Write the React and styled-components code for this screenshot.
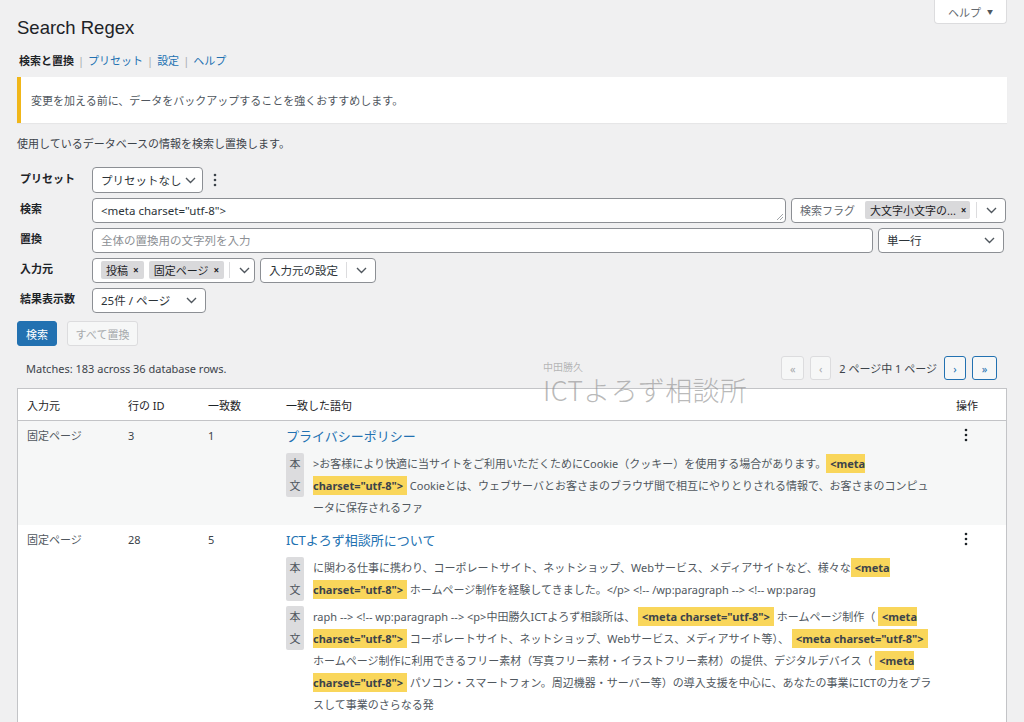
import React from 'react';
import styled, { createGlobalStyle } from 'styled-components';

const FONT = `"Noto Sans", "Noto Sans CJK JP", sans-serif`;

const Global = createGlobalStyle`
  html, body { margin: 0; padding: 0; background: #f0f0f1; }
  body { font-family: ${FONT}; color: #3c434a; font-size: 11px; }
  * { box-sizing: border-box; }
`;

const Page = styled.div`
  position: relative;
  padding: 0 17px;
  height: 722px;
  overflow: hidden;
`;

const Header = styled.div`
  display: flex;
  justify-content: space-between;
  align-items: flex-start;
`;

const Title = styled.h1`
  margin: 16px 0 0;
  font-family: "Liberation Sans", "Noto Sans CJK JP", sans-serif;
  font-size: 18.5px;
  line-height: 24px;
  font-weight: 400;
  color: #1d2327;
`;

const HelpTab = styled.div`
  width: 73px;
  height: 24px;
  background: #fff;
  border: 1px solid #dcdcde;
  border-top: none;
  border-radius: 0 0 4px 4px;
  color: #646970;
  font-size: 11px;
  display: flex;
  align-items: center;
  justify-content: center;
  gap: 6px;
`;

const Caret = styled.span`
  font-size: 6px;
  color: #50575e;
`;

const SubNav = styled.nav`
  margin: 13px 0 0 2px;
  display: flex;
  align-items: center;
  line-height: 16px;
  font-size: 11px;
`;

const NavItem = styled.span`
  color: ${p => (p.$current ? '#1d2327' : '#2271b1')};
  font-weight: ${p => (p.$current ? 700 : 400)};
`;

const NavSep = styled.span`
  color: #a7aaad;
  margin: 0 4px;
`;

const Notice = styled.div`
  margin-top: 8px;
  height: 46px;
  background: #fff;
  border-left: 4px solid #f0b619;
  box-shadow: 0 1px 1px rgba(0, 0, 0, 0.04);
  padding: 0 10px;
  display: flex;
  align-items: center;
  color: #50575e;
  font-size: 11px;
`;

const Desc = styled.p`
  margin: 13px 0 0;
  line-height: 16px;
  color: #3c434a;
`;

const Form = styled.div`
  margin-top: 15px;
  display: flex;
  flex-direction: column;
  gap: 4px;
`;

const Row = styled.div`
  display: flex;
  align-items: center;
  height: 26px;
`;

const Label = styled.div`
  width: 75px;
  padding: 0 0 4px 3px;
  font-weight: 700;
  color: #1d2327;
  font-size: 11px;
  flex: none;
`;

const Controls = styled.div`
  display: flex;
  align-items: center;
  gap: 5px;
`;

const Box = styled.div`
  position: relative;
  width: ${p => p.$w}px;
  height: ${p => p.$h || 25}px;
  background: #fff;
  border: 1px solid #8c8f94;
  border-radius: 4px;
  display: flex;
  align-items: center;
  padding: 0 ${p => (p.$pr != null ? p.$pr : 8)}px 0 8px;
  font-size: 11.5px;
  color: #2c3338;
  flex: none;
`;

const Grow = styled.span`
  flex: 1;
  white-space: nowrap;
  overflow: hidden;
`;

const Placeholder = styled.span`
  color: #8c8f94;
  font-size: 11.5px;
`;

const FlagLabel = styled.span`
  color: #646970;
  font-size: 11px;
  margin-right: 10px;
`;

const Tag = styled.span`
  display: inline-flex;
  align-items: center;
  justify-content: space-between;
  gap: 5px;
  height: 18px;
  padding: 0 5px;
  background: #d9d9db;
  border-radius: 2px;
  color: #1d2327;
  font-size: 11px;
  width: ${p => (p.$w ? `${p.$w}px` : 'auto')};
  margin-right: 5px;
  white-space: nowrap;
  flex: none;
`;

const TagX = styled.span`
  font-weight: 700;
  font-size: 10px;
`;

const Sep = styled.span`
  flex: none;
  width: 1px;
  height: 16px;
  background: #dcdcde;
  margin: 0 ${p => p.$m || 8}px 0 auto;
`;

const Kebab = styled.span`
  display: inline-flex;
  width: 14px;
  justify-content: center;
  margin-left: ${p => p.$ml || 0}px;
`;

const Resize = styled.svg`
  position: absolute;
  right: 2px;
  bottom: 2px;
`;

const Buttons = styled.div`
  margin-top: 8px;
  display: flex;
  gap: 10px;
`;

const Button = styled.div`
  height: 25px;
  width: ${p => p.$w}px;
  border-radius: 3px;
  display: flex;
  align-items: center;
  justify-content: center;
  font-size: 11px;
  background: ${p => (p.$primary ? '#2271b1' : '#f6f7f7')};
  border: 1px solid ${p => (p.$primary ? '#2271b1' : '#dcdcde')};
  color: ${p => (p.$primary ? '#fff' : '#a7aaad')};
`;

const ResultsBar = styled.div`
  margin-top: 10px;
  height: 24px;
  display: flex;
  align-items: center;
  justify-content: space-between;
  padding: 0 10px 0 9px;
  color: #3c434a;
`;

const Pager = styled.div`
  display: flex;
  align-items: center;
  gap: 6px;
`;

const PageBtn = styled.div`
  width: ${p => p.$w || 22}px;
  height: 24px;
  border-radius: 3px;
  border: 1px solid ${p => (p.$active ? '#2271b1' : '#dcdcde')};
  background: #f6f7f7;
  color: ${p => (p.$active ? '#2271b1' : '#a7aaad')};
  display: flex;
  align-items: center;
  justify-content: center;
  font-size: 11px;
`;

const PageText = styled.span`
  margin: 0 1px 0 2px;
  color: #3c434a;
`;

const Table = styled.div`
  margin-top: 8px;
  background: #fff;
  border: 1px solid #c3c4c7;
`;

const Grid = styled.div`
  display: grid;
  grid-template-columns: 101px 80px 78px 670px 1fr;
`;

const HeadRow = styled(Grid)`
  height: 32px;
  align-items: center;
  border-bottom: 1px solid #c3c4c7;
  color: #1d2327;
`;

const BodyRow = styled(Grid)`
  background: ${p => (p.$striped ? '#f6f7f7' : '#fff')};
  padding-bottom: 6px;
`;

const Cell = styled.div`
  padding: 0 9px;
`;

const BodyCell = styled.div`
  padding: 7px 9px 0;
  line-height: 16px;
  color: ${p => p.$c || '#50575e'};
`;

const RowTitle = styled.a`
  display: block;
  font-size: 13px;
  line-height: 16px;
  color: #2271b1;
  text-decoration: none;
`;

const Context = styled.div`
  display: flex;
  gap: 9px;
  margin-top: ${p => (p.$first ? 9 : 5)}px;
`;

const Badge = styled.div`
  flex: none;
  width: 18px;
  line-height: 22px;
  text-align: center;
  background: #dcdcde;
  color: #50575e;
  border-radius: 2px;
  align-self: flex-start;
`;

const CtxText = styled.div`
  flex: 1;
  line-height: 22px;
  color: #50575e;
`;

const Mark = styled.mark`
  background: #f9d65b;
  color: #3c434a;
  font-weight: 700;
  padding: 2px 4px;
`;

const NoWrap = styled.span`
  white-space: nowrap;
`;

const Watermark = styled.div`
  position: absolute;
  left: 543px;
  top: 361px;
  pointer-events: none;
  font-family: "Noto Sans CJK JP", sans-serif;
`;

const WmSmall = styled.div`
  font-size: 10px;
  line-height: 12px;
  color: rgba(120, 120, 120, 0.5);
`;

const WmBig = styled.div`
  margin-top: 2px;
  font-size: 27px;
  line-height: 30px;
  font-weight: 300;
  color: rgba(140, 140, 140, 0.6);
  letter-spacing: 0.3px;
`;

const Chevron = () => (
  <svg width="11" height="7" viewBox="0 0 11 7" style={{ flex: 'none' }}>
    <polyline points="1,1 5.5,5.5 10,1" fill="none" stroke="#50575e" strokeWidth="1.4" />
  </svg>
);

const Dots = ({ color = '#1d2327' }) => (
  <svg width="4" height="14" viewBox="0 0 4 14">
    <circle cx="2" cy="2" r="1.3" fill={color} />
    <circle cx="2" cy="7" r="1.3" fill={color} />
    <circle cx="2" cy="12" r="1.3" fill={color} />
  </svg>
);

const Meta = () => (
  <Mark>
    {'<meta '}
    <NoWrap>{'charset="utf-8">'}</NoWrap>
  </Mark>
);

export default function App() {
  return (
    <>
      <Global />
      <Page>
        <Header>
          <Title>Search Regex</Title>
          <HelpTab>
            ヘルプ <Caret>▼</Caret>
          </HelpTab>
        </Header>

        <SubNav>
          <NavItem $current>検索と置換</NavItem>
          <NavSep>|</NavSep>
          <NavItem>プリセット</NavItem>
          <NavSep>|</NavSep>
          <NavItem>設定</NavItem>
          <NavSep>|</NavSep>
          <NavItem>ヘルプ</NavItem>
        </SubNav>

        <Notice>変更を加える前に、データをバックアップすることを強くおすすめします。</Notice>

        <Desc>使用しているデータベースの情報を検索し置換します。</Desc>

        <Form>
          <Row>
            <Label>プリセット</Label>
            <Controls>
              <Box $w={111} $h={26} $pr={6}>
                <Grow>プリセットなし</Grow>
                <Chevron />
              </Box>
              <Kebab>
                <Dots color="#3c434a" />
              </Kebab>
            </Controls>
          </Row>
          <Row>
            <Label>検索</Label>
            <Controls>
              <Box $w={694}>
                <Grow>{'<meta charset="utf-8">'}</Grow>
                <Resize width="7" height="7" viewBox="0 0 7 7">
                  <line x1="1" y1="7" x2="7" y2="1" stroke="#8c8f94" strokeWidth="0.8" />
                  <line x1="4" y1="7" x2="7" y2="4" stroke="#8c8f94" strokeWidth="0.8" />
                </Resize>
              </Box>
              <Box $w={215} $pr={8}>
                <FlagLabel>検索フラグ</FlagLabel>
                <Tag $w={105}>
                  大文字小文字の...
                  <TagX>×</TagX>
                </Tag>
                <Sep $m={9} />
                <Chevron />
              </Box>
            </Controls>
          </Row>
          <Row>
            <Label>置換</Label>
            <Controls>
              <Box $w={781}>
                <Placeholder>全体の置換用の文字列を入力</Placeholder>
              </Box>
              <Box $w={126}>
                <Grow>単一行</Grow>
                <Chevron />
              </Box>
            </Controls>
          </Row>
          <Row>
            <Label>入力元</Label>
            <Controls>
              <Box $w={163}>
                <Tag>
                  投稿<TagX>×</TagX>
                </Tag>
                <Tag>
                  固定ページ<TagX>×</TagX>
                </Tag>
                <Sep $m={9} />
                <Chevron />
              </Box>
              <Box $w={116}>
                <Grow>入力元の設定</Grow>
                <Sep $m={9} />
                <Chevron />
              </Box>
            </Controls>
          </Row>
          <Row>
            <Label>結果表示数</Label>
            <Controls>
              <Box $w={114}>
                <Grow>25件 / ページ</Grow>
                <Chevron />
              </Box>
            </Controls>
          </Row>
        </Form>

        <Buttons>
          <Button $primary $w={40}>検索</Button>
          <Button $w={71}>すべて置換</Button>
        </Buttons>

        <ResultsBar>
          <span>Matches: 183 across 36 database rows.</span>
          <Pager>
            <PageBtn $w={23}>«</PageBtn>
            <PageBtn $w={21}>‹</PageBtn>
            <PageText>2 ページ中 1 ページ</PageText>
            <PageBtn $active $w={22}>›</PageBtn>
            <PageBtn $active $w={25}>»</PageBtn>
          </Pager>
        </ResultsBar>

        <Table>
          <HeadRow>
            <Cell>入力元</Cell>
            <Cell>行の ID</Cell>
            <Cell>一致数</Cell>
            <Cell>一致した語句</Cell>
            <Cell>操作</Cell>
          </HeadRow>

          <BodyRow $striped>
            <BodyCell>固定ページ</BodyCell>
            <BodyCell $c="#3c434a">3</BodyCell>
            <BodyCell $c="#3c434a">1</BodyCell>
            <BodyCell>
              <RowTitle>プライバシーポリシー</RowTitle>
              <Context $first>
                <Badge>本文</Badge>
                <CtxText>
                  {'>お客様により快適に当サイトをご利用いただくためにCookie（クッキー）を使用する場合があります。'}
                  <Meta />
                  {' Cookieとは、ウェブサーバとお客さまのブラウザ間で相互にやりとりされる情報で、お客さまのコンピュータに保存されるファ'}
                </CtxText>
              </Context>
            </BodyCell>
            <BodyCell>
              <Kebab $ml={3}>
                <Dots />
              </Kebab>
            </BodyCell>
          </BodyRow>

          <BodyRow>
            <BodyCell>固定ページ</BodyCell>
            <BodyCell $c="#3c434a">28</BodyCell>
            <BodyCell $c="#3c434a">5</BodyCell>
            <BodyCell>
              <RowTitle>ICTよろず相談所について</RowTitle>
              <Context $first>
                <Badge>本文</Badge>
                <CtxText>
                  {' に関わる仕事に携わり、コーポレートサイト、ネットショップ、Webサービス、メディアサイトなど、様々な'}
                  <Meta />
                  {' ホームページ制作を経験してきました。</p> <!-- /wp:paragraph --> <!-- wp:parag'}
                </CtxText>
              </Context>
              <Context>
                <Badge>本文</Badge>
                <CtxText>
                  {'raph --> <!-- wp:paragraph --> <p>中田勝久ICTよろず相談所は、 '}
                  <Meta />
                  {' ホームページ制作（ '}
                  <Meta />
                  {' コーポレートサイト、ネットショップ、Webサービス、メディアサイト等）、 '}
                  <Meta />
                  {' ホームページ制作に利用できるフリー素材（写真フリー素材・イラストフリー素材）の提供、デジタルデバイス（ '}
                  <Meta />
                  {' パソコン・スマートフォン。周辺機器・サーバー等）の導入支援を中心に、あなたの事業にICTの力をプラスして事業のさらなる発'}
                </CtxText>
              </Context>
            </BodyCell>
            <BodyCell>
              <Kebab $ml={3}>
                <Dots />
              </Kebab>
            </BodyCell>
          </BodyRow>
        </Table>

        <Watermark>
          <WmSmall>中田勝久</WmSmall>
          <WmBig>ICTよろず相談所</WmBig>
        </Watermark>
      </Page>
    </>
  );
}
